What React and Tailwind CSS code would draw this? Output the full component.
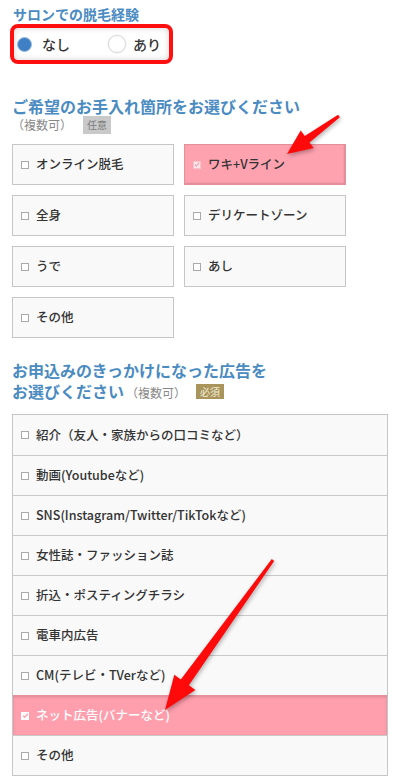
import React from 'react'

const parts = [
  ['オンライン脱毛', false],
  ['ワキ+Vライン', true],
  ['全身', false],
  ['デリケートゾーン', false],
  ['うで', false],
  ['あし', false],
  ['その他', false],
]

const ads = [
  ['紹介（友人・家族からの口コミなど）', false],
  ['動画(Youtubeなど)', false],
  ['SNS(Instagram/Twitter/TikTokなど)', false],
  ['女性誌・ファッション誌', false],
  ['折込・ポスティングチラシ', false],
  ['電車内広告', false],
  ['CM(テレビ・TVerなど)', false],
  ['ネット広告(バナーなど)', true],
  ['その他', false],
]

// arrow polygon from tail to tip
const arrow = (x1, y1, x2, y2, w0, w1, hw, hl) => {
  const dx = x2 - x1
  const dy = y2 - y1
  const L = Math.hypot(dx, dy)
  const ux = dx / L
  const uy = dy / L
  const px = -uy
  const py = ux
  const bx = x2 - ux * hl
  const by = y2 - uy * hl
  const pt = (x, y, k) => `${(x + px * k).toFixed(1)},${(y + py * k).toFixed(1)}`
  return [
    pt(x1, y1, w0 / 2),
    pt(bx, by, w1 / 2),
    pt(bx, by, hw),
    `${x2},${y2}`,
    pt(bx, by, -hw),
    pt(bx, by, -w1 / 2),
    pt(x1, y1, -w0 / 2),
  ].join(' ')
}

const Check = ({ on, light }) => (
  <span
    className={
      on
        ? 'flex items-center justify-center w-[8px] h-[8px] shrink-0 ' + (light ? 'bg-white' : 'bg-[#ffe3e8] border border-[#f3c2cb]')
        : 'w-[8px] h-[8px] shrink-0 border border-[#a9a9a9] bg-white'
    }
  >
    {on && (
      <svg viewBox="0 0 8 8" className="w-[7px] h-[7px]">
        <path d="M1.3 4.2 L3.2 6 L6.7 1.8" fill="none" stroke={light ? '#ff9fae' : '#e3a3ae'} strokeWidth="1.5" />
      </svg>
    )}
  </span>
)

const App = () => {
  return (
    <div className="relative w-[400px] h-[780px] overflow-hidden bg-white px-3 text-[#333] font-[family-name:'Noto_Sans_CJK_JP','Noto_Sans',sans-serif]">
      <p className="pt-[4px] text-[14px] leading-[20px] font-bold text-[#4a8bc2] pl-[1px]">サロンでの脱毛経験</p>

      <div className="-ml-[2px] w-[163px] h-[40px] border-4 border-[#ff0f0f] rounded-[8px] shadow-[inset_0_0_6px_rgba(0,0,0,0.18)] flex items-center pl-[3px]">
        <div className="flex items-center gap-[10px]">
          <span className="w-[15px] h-[15px] rounded-full bg-[#3f7fc4] border border-[#9bbde2]"></span>
          <span className="text-[14px] font-medium">なし</span>
        </div>
        <div className="flex items-center gap-[7px] ml-[38px]">
          <span className="w-[18px] h-[18px] rounded-full bg-white border border-[#dcdcdc] shadow-[0_0_2px_rgba(0,0,0,0.15)]"></span>
          <span className="text-[14px] font-medium">あり</span>
        </div>
      </div>

      <h2 className="mt-[32px] text-[16px] leading-[20px] font-bold text-[#4a8bc2]">ご希望のお手入れ箇所をお選びください</h2>
      <div className="flex items-center h-[18px] gap-[11px]">
        <span className="text-[12px] leading-[16px] text-[#888]">（複数可）</span>
        <span className="h-[18px] px-[4px] flex items-center bg-[#c9c9c9] text-[10px] leading-[12px] text-[#7d7d7d]">任意</span>
      </div>

      <div className="mt-[10px] grid grid-cols-[162px_162px] gap-x-[10px] gap-y-[10px]">
        {parts.map(([label, on]) => (
          <div
            key={label}
            className={
              'h-[41px] flex items-center gap-[7px] pl-[8px] border ' +
              (on ? 'bg-[#ffa2b0] border-[#e3909d] shadow-[inset_-1px_-1px_2px_rgba(0,0,0,0.15)]' : 'bg-[#f9f9f9] border-[#c6c6c6]')
            }
          >
            <Check on={on} />
            <span className="text-[12.5px] font-medium">{label}</span>
          </div>
        ))}
      </div>

      <h2 className="mt-[22px] text-[16px] leading-[21px] font-bold text-[#4a8bc2]">
        お申込みのきっかけになった広告を
        <br />
        お選びください
        <span className="ml-[2px] text-[12px] leading-[16px] font-normal text-[#888]">（複数可）</span>
        <span className="inline-flex items-center align-middle ml-[10px] h-[15px] px-[4px] bg-[#a9955c] text-[10px] leading-[12px] font-normal text-[#f3ecd8] relative -top-[2px]">必須</span>
      </h2>

      <div className="mt-[12px] w-[376px] border border-[#c6c6c6] bg-[#f9f9f9]">
        {ads.map(([label, on], i) => (
          <div
            key={label + i}
            className={
              'h-[40px] flex items-center gap-[7px] pl-[8px] ' +
              (i > 0 ? 'border-t ' : '') +
              (on ? 'bg-[#ff9fae] border-[#e5909d] text-white shadow-[inset_0_1px_3px_rgba(0,0,0,0.15)]' : 'border-[#c9c9c9]')
            }
          >
            <Check on={on} light />
            <span className="text-[12.5px] font-medium">{label}</span>
          </div>
        ))}
      </div>

      <svg className="absolute inset-0 w-[400px] h-[780px] pointer-events-none drop-shadow-[1px_2px_2px_rgba(0,0,0,0.3)]" viewBox="0 0 400 780">
        <polygon points={arrow(339, 116, 287, 154, 3, 8, 11, 25)} fill="#ff0a0a" />
        <polygon points={arrow(273, 560, 165, 710, 3, 10, 13, 34)} fill="#ff0a0a" />
      </svg>
    </div>
  )
}

export default App
